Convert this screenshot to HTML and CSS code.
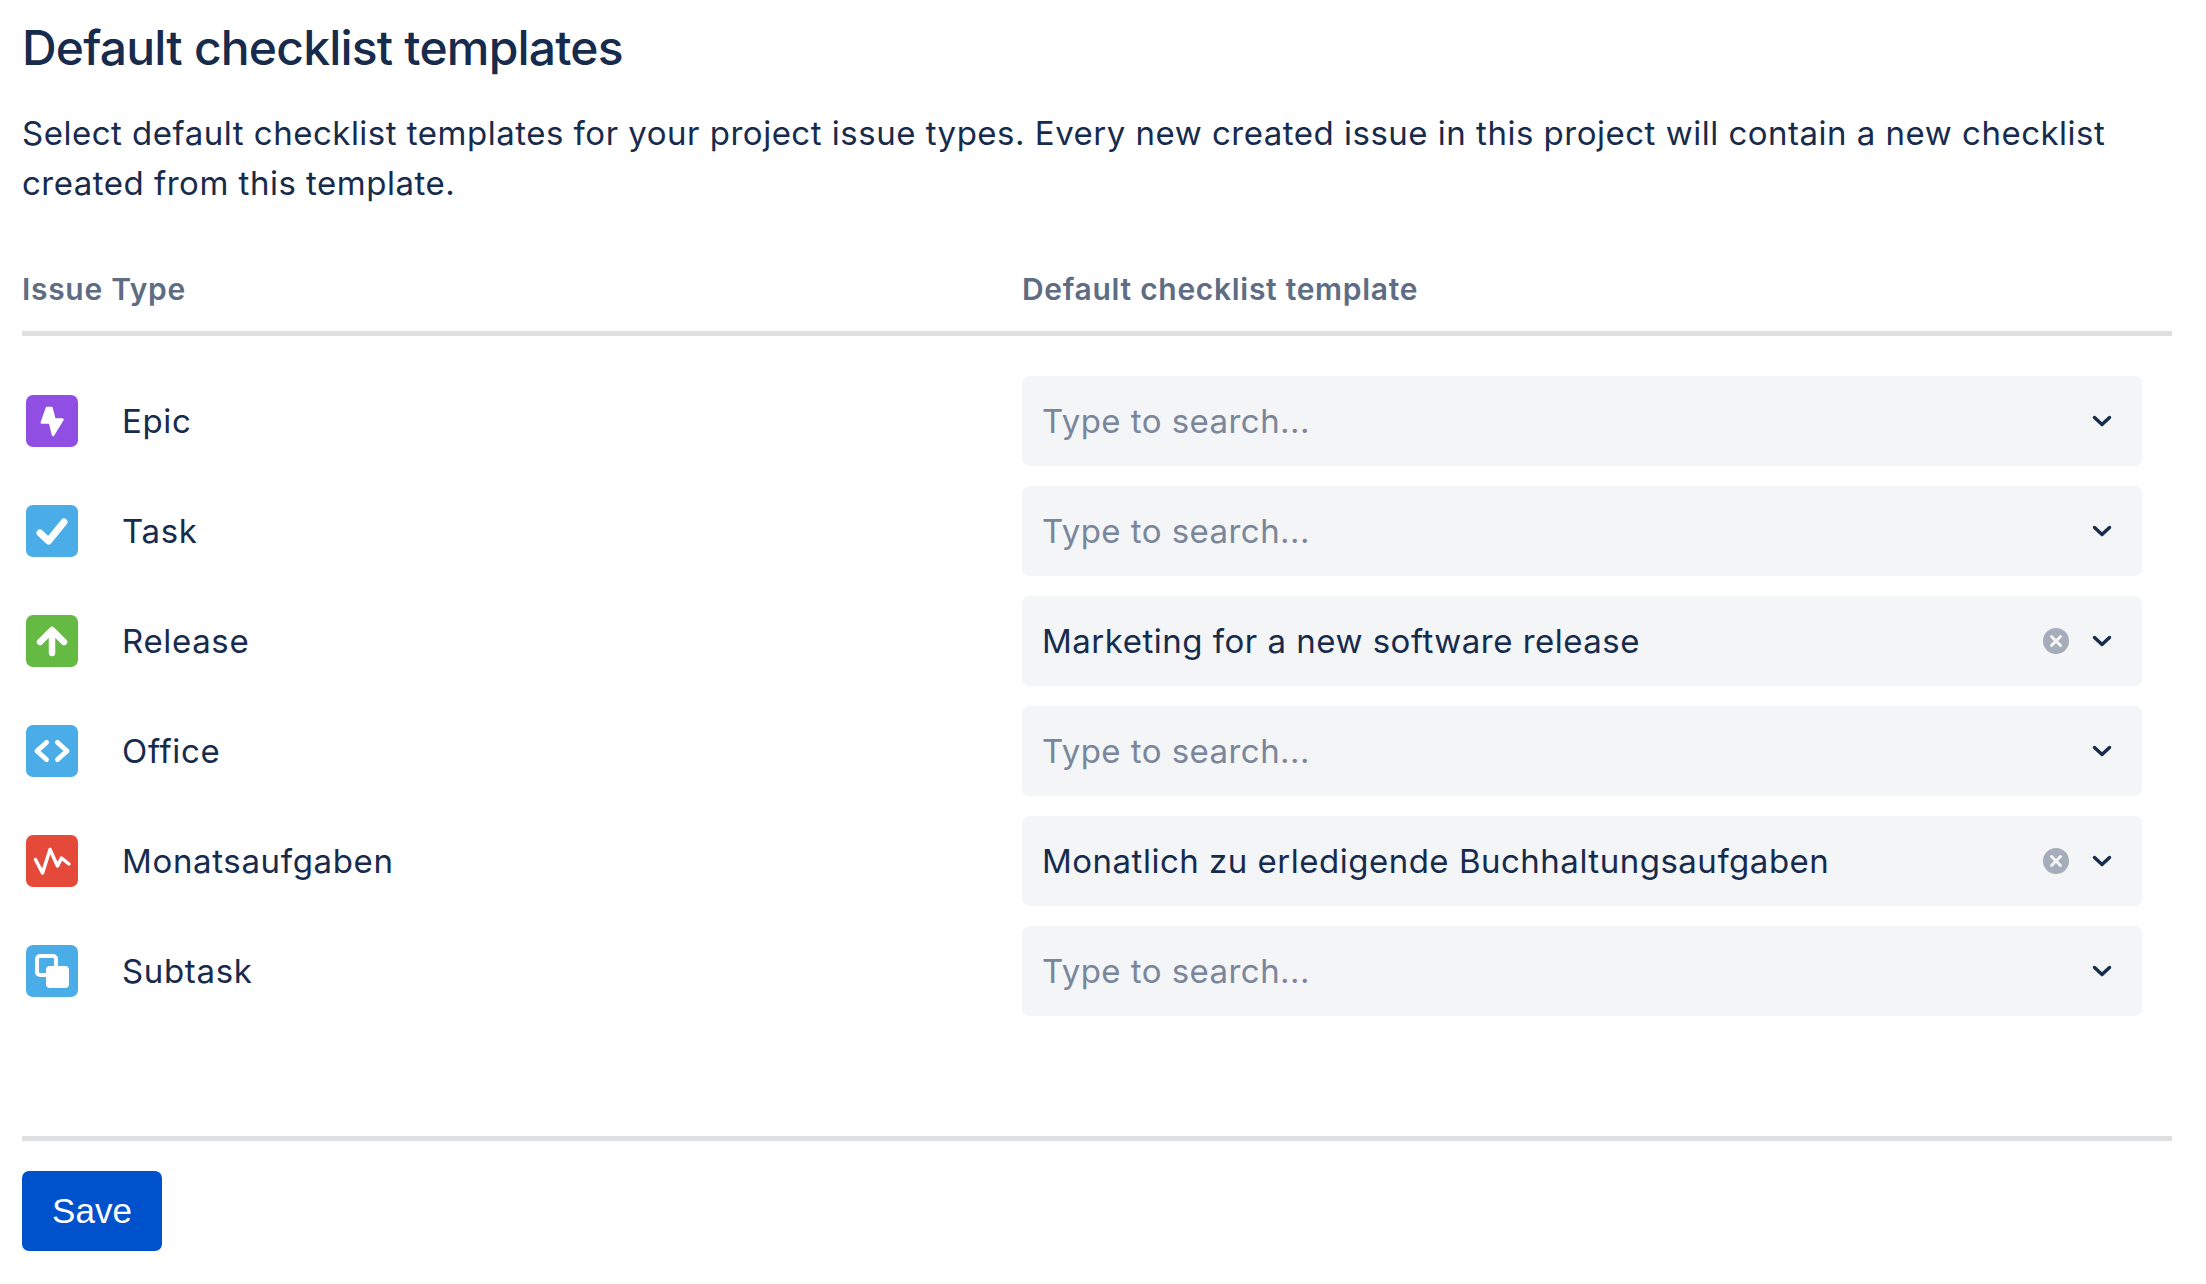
FILE: index.html
```html
<!DOCTYPE html>
<html lang="en">
<head>
<meta charset="utf-8">
<title>Default checklist templates</title>
<link rel="stylesheet" href="styles.css">
</head>
<body>
<main class="page">
  <h1 class="title">Default checklist templates</h1>
  <p class="intro">Select default checklist templates for your project issue types. Every new created issue in this project will contain a new checklist created from this template.</p>
  <div class="head">
    <div>Issue Type</div>
    <div>Default checklist template</div>
  </div>
  <div class="rows">
    <div class="row">
      <div class="type">
        <svg class="icon" viewBox="0 0 52 52"><rect width="52" height="52" rx="7" fill="#904ee2"/><path d="M21 13 15.800 27.500h8.200L27 40 36.500 24.500H28.500L25.500 13Z" fill="#fff" stroke="#fff" stroke-width="2.500" stroke-linejoin="round"/></svg>
        <span>Epic</span>
      </div>
      <div class="select"><span class="placeholder">Type to search...</span><span class="tools"><svg class="chev" viewBox="0 0 20 12"><path d="M2.500 2.500 10 9.500l7.500-7" /></svg></span></div>
    </div>
    <div class="row">
      <div class="type">
        <svg class="icon" viewBox="0 0 52 52"><rect width="52" height="52" rx="7" fill="#4bade8"/><path d="M14 28 22.500 36 38 17" fill="none" stroke="#fff" stroke-width="7" stroke-linecap="round" stroke-linejoin="round"/></svg>
        <span>Task</span>
      </div>
      <div class="select"><span class="placeholder">Type to search...</span><span class="tools"><svg class="chev" viewBox="0 0 20 12"><path d="M2.500 2.500 10 9.500l7.500-7" /></svg></span></div>
    </div>
    <div class="row">
      <div class="type">
        <svg class="icon" viewBox="0 0 52 52"><rect width="52" height="52" rx="7" fill="#65ba43"/><path d="M26 38V16M14 27 26 15l12 12" fill="none" stroke="#fff" stroke-width="6.500" stroke-linecap="round" stroke-linejoin="round"/></svg>
        <span>Release</span>
      </div>
      <div class="select"><span class="value">Marketing for a new software release</span><span class="tools"><svg class="clear" viewBox="0 0 26 26"><circle cx="13" cy="13" r="13" fill="#a5adba"/><path d="M8.500 8.500l9 9m0-9-9 9" stroke="#f4f5f7" stroke-width="3" stroke-linecap="round"/></svg><svg class="chev" viewBox="0 0 20 12"><path d="M2.500 2.500 10 9.500l7.500-7" /></svg></span></div>
    </div>
    <div class="row">
      <div class="type">
        <svg class="icon" viewBox="0 0 52 52"><rect width="52" height="52" rx="7" fill="#4bade8"/><path d="M20.500 17.500 11 26l9.500 8.500M31.500 17.500 41 26l-9.500 8.500" fill="none" stroke="#fff" stroke-width="5" stroke-linecap="round" stroke-linejoin="round"/></svg>
        <span>Office</span>
      </div>
      <div class="select"><span class="placeholder">Type to search...</span><span class="tools"><svg class="chev" viewBox="0 0 20 12"><path d="M2.500 2.500 10 9.500l7.500-7" /></svg></span></div>
    </div>
    <div class="row">
      <div class="type">
        <svg class="icon" viewBox="0 0 52 52"><rect width="52" height="52" rx="7" fill="#e5493a"/><path d="M9.500 24.500 16.500 38 24 14.500 31.500 31 35.500 23 43 29" fill="none" stroke="#fff" stroke-width="3.500" stroke-linecap="round" stroke-linejoin="round"/></svg>
        <span>Monatsaufgaben</span>
      </div>
      <div class="select"><span class="value">Monatlich zu erledigende Buchhaltungsaufgaben</span><span class="tools"><svg class="clear" viewBox="0 0 26 26"><circle cx="13" cy="13" r="13" fill="#a5adba"/><path d="M8.500 8.500l9 9m0-9-9 9" stroke="#f4f5f7" stroke-width="3" stroke-linecap="round"/></svg><svg class="chev" viewBox="0 0 20 12"><path d="M2.500 2.500 10 9.500l7.500-7" /></svg></span></div>
    </div>
    <div class="row">
      <div class="type">
        <svg class="icon" viewBox="0 0 52 52"><rect width="52" height="52" rx="7" fill="#4bade8"/><rect x="11" y="11" width="19" height="19" rx="3" fill="none" stroke="#fff" stroke-width="4"/><rect x="20" y="21" width="23" height="22" rx="4" fill="#fff"/></svg>
        <span>Subtask</span>
      </div>
      <div class="select"><span class="placeholder">Type to search...</span><span class="tools"><svg class="chev" viewBox="0 0 20 12"><path d="M2.500 2.500 10 9.500l7.500-7" /></svg></span></div>
    </div>
  </div>
  <div class="footer">
    <button class="save" type="button">Save</button>
  </div>
</main>
</body>
</html>
```
FILE: styles.css
```css
* { box-sizing: border-box; }
html, body { margin: 0; background: #fff; }
body { font-family: Inter, "Liberation Sans", sans-serif; color: #172b4d; }
.page { width: 2172px; padding-left: 22px; height: 1284px; overflow: hidden; }
.title { margin: 0; padding-top: 18px; font-size: 48px; line-height: 60px; font-weight: 500; letter-spacing: -0.8px; color: #172b4d; }
.intro { margin: 30px 0 0; font-size: 33px; line-height: 50px; font-weight: 400; letter-spacing: 0.5px; color: #172b4d; width: 2130px; }
.head { display: grid; grid-template-columns: 1000px 1fr; margin-top: 63px; height: 65px; border-bottom: 5px solid #dfe0e2; font-size: 30px; line-height: 36px; font-weight: 600; color: #5e6c84; letter-spacing: 0.7px; }
.rows { padding-top: 40px; display: flex; flex-direction: column; gap: 20px; }
.row { display: grid; grid-template-columns: 1000px 1120px; align-items: center; height: 90px; }
.type { display: flex; align-items: center; gap: 44px; padding-left: 4px; font-size: 33px; letter-spacing: 0.65px; }
.icon { width: 52px; height: 52px; flex: none; }
.select { display: flex; align-items: center; justify-content: space-between; height: 90px; background: #f3f5f7; border-radius: 7px; padding: 0 30px 0 20px; font-size: 33px; letter-spacing: 0.45px; }
.placeholder { color: #7a869a; }
.value { color: #172b4d; letter-spacing: 0.5px; }
.tools { display: flex; align-items: center; gap: 23px; }
.chev { width: 20px; height: 12px; fill: none; stroke: #172b4d; stroke-width: 3.4; stroke-linecap: round; stroke-linejoin: round; }
.clear { width: 26px; height: 26px; }
.footer { margin-top: 120px; border-top: 5px solid #dfe0e2; padding-top: 30px; }
.save { display: block; width: 140px; height: 80px; padding: 0; border: 0; border-radius: 7px; background: #0052cc; color: #fff; font-family: "Liberation Sans", Arial, sans-serif; font-size: 35px; }
```
